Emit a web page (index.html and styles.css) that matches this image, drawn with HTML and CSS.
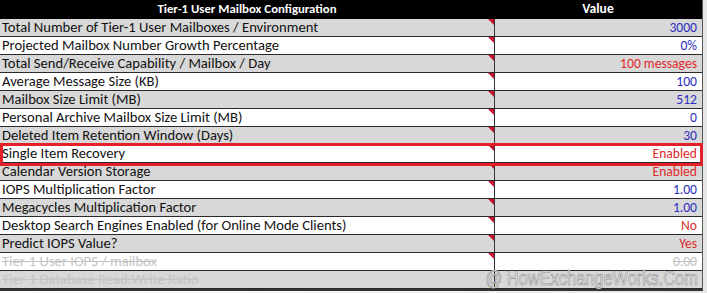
FILE: index.html
```html
<!DOCTYPE html>
<html>
<head>
<meta charset="utf-8">
<link rel="stylesheet" href="styles.css">
</head>
<body>
<div class="frame">
  <div class="sheet">
    <div class="row head">
      <div class="cell label">Tier-1 User Mailbox Configuration</div>
      <div class="cell value">Value</div>
    </div>
    <div class="row gray"><div class="cell label">Total Number of Tier-1 User Mailboxes / Environment<i class="tri"></i></div><div class="cell value blue">3000</div></div>
    <div class="row"><div class="cell label">Projected Mailbox Number Growth Percentage<i class="tri"></i></div><div class="cell value blue">0%</div></div>
    <div class="row gray"><div class="cell label">Total Send/Receive Capability / Mailbox / Day<i class="tri"></i></div><div class="cell value red">100 messages</div></div>
    <div class="row"><div class="cell label">Average Message Size (KB)<i class="tri"></i></div><div class="cell value blue">100</div></div>
    <div class="row gray"><div class="cell label">Mailbox Size Limit (MB)<i class="tri"></i></div><div class="cell value blue">512</div></div>
    <div class="row"><div class="cell label">Personal Archive Mailbox Size Limit (MB)<i class="tri"></i></div><div class="cell value blue">0</div></div>
    <div class="row gray"><div class="cell label">Deleted Item Retention Window (Days)<i class="tri"></i></div><div class="cell value blue">30</div></div>
    <div class="row"><div class="cell label">Single Item Recovery<i class="tri"></i></div><div class="cell value red">Enabled</div></div>
    <div class="row gray"><div class="cell label">Calendar Version Storage<i class="tri"></i></div><div class="cell value red">Enabled</div></div>
    <div class="row"><div class="cell label">IOPS Multiplication Factor<i class="tri"></i></div><div class="cell value blue">1.00</div></div>
    <div class="row gray"><div class="cell label">Megacycles Multiplication Factor<i class="tri"></i></div><div class="cell value blue">1.00</div></div>
    <div class="row"><div class="cell label">Desktop Search Engines Enabled (for Online Mode Clients)<i class="tri"></i></div><div class="cell value red">No</div></div>
    <div class="row gray"><div class="cell label">Predict IOPS Value?<i class="tri"></i></div><div class="cell value red">Yes</div></div>
    <div class="row off"><div class="cell label">Tier-1 User IOPS / mailbox<i class="tri"></i></div><div class="cell value">0.00</div></div>
    <div class="row gray off"><div class="cell label">Tier-1 Database Read:Write Ratio</div><div class="cell value"></div></div>
    <div class="highlight"></div>
    <div class="mark">@ HowExchangeWorks.Com</div>
  </div>
</div>
</body>
</html>
```
FILE: styles.css
```css
html, body {
  margin: 0;
  padding: 0;
  background: #ffffff;
}
.frame {
  width: 707px;
  height: 293px;
  box-sizing: border-box;
  padding: 0 4px 3px 0;
  background: linear-gradient(to right, #ffffff, #e6e6e6);
  overflow: hidden;
}
.sheet {
  position: relative;
  width: 703px;
  border-right: 1px solid #555;
  border-bottom: 2px solid #333;
  box-sizing: border-box;
  font-family: Carlito, "Liberation Sans", Arial, sans-serif;
  font-size: 14.6px;
}
.row {
  display: grid;
  grid-template-columns: 494px 1fr;
  height: 18px;
  box-sizing: border-box;
  border-bottom: 1.5px solid #2a2a2a;
  background: #ffffff;
  color: #111;
}
.row.gray {
  background: #d8d8d8;
}
.row.head {
  background: #000;
  color: #fff;
  font-weight: bold;
  font-size: 12.8px;
  height: 19px;
  border-bottom: 0;
}
.head .label, .head .value {
  text-align: center;
  padding: 0;
}
.head .value { border-left: 0; }
.cell {
  position: relative;
  line-height: 17px;
  white-space: nowrap;
  overflow: hidden;
}
.label {
  padding-left: 2px;
}
.value {
  text-align: right;
  padding-right: 5px;
  border-left: 1px solid #333;
  font-size: 13.6px;
}
.blue { color: #2e2ec0; }
.red { color: #e02a2a; }
.tri {
  position: absolute;
  top: 0;
  right: 0;
  width: 0;
  height: 0;
  border-top: 6px solid #c8102e;
  border-left: 6px solid transparent;
}
.off .cell {
  color: #c4c4c4;
  text-decoration: line-through;
}
.highlight {
  position: absolute;
  left: 0;
  top: 143px;
  width: 703px;
  height: 23px;
  box-sizing: border-box;
  border: 3px solid #e4202a;
}
.mark {
  position: absolute;
  right: 4px;
  bottom: 0px;
  font-family: "Liberation Sans", Arial, sans-serif;
  font-size: 20px;
  line-height: 22px;
  color: #e8e8e8;
  -webkit-text-stroke: 0.6px #8a8a8a;
  transform: scaleX(0.82);
  transform-origin: right bottom;
}
```
